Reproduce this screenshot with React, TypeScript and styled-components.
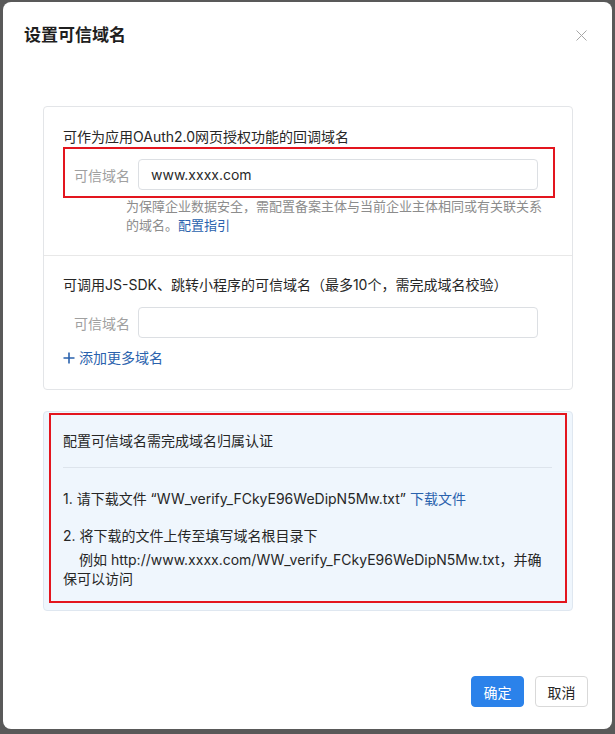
import React from "react";
import styled, { createGlobalStyle } from "styled-components";

const GlobalStyle = createGlobalStyle`
    html, body {
        margin: 0;
        padding: 0;
    }
    body {
        font-family: Inter, "Noto Sans CJK SC", sans-serif;
        color: #333;
        background: #595959;
    }
    * {
        box-sizing: border-box;
    }
`;

const Backdrop = styled.div`
    height: 734px;
    padding: 2px 3px 5px 3px;
    background: #595959;
    display: flex;
`;

const Dialog = styled.div`
    flex: 1;
    display: flex;
    flex-direction: column;
    background: #fff;
    border-radius: 8px;
    padding: 21px 24px 22px 21px;
`;

const Header = styled.div`
    display: flex;
    align-items: center;
    justify-content: space-between;
    height: 24px;
`;

const Title = styled.h2`
    margin: 0;
    font-size: 17px;
    font-weight: 700;
    line-height: 24px;
    color: #1f1f1f;
`;

const Close = styled.button`
    width: 14px;
    height: 14px;
    border: 0;
    padding: 0;
    background: none;
    display: flex;
    align-items: center;
    justify-content: center;
`;

const Body = styled.div`
    flex: 1;
    padding: 59px 15px 0 19px;
    display: flex;
    flex-direction: column;
    gap: 21px;
`;

const Card = styled.div`
    border: 1px solid #e3e5e8;
    border-radius: 4px;
`;

const Section = styled.div<{ $divider?: boolean }>`
    position: relative;
    padding: ${p => (p.$divider ? "19px 19px 21px" : "20px 19px 20px")};
    border-top: ${p => (p.$divider ? "1px solid #e8e8e8" : "none")};
`;

const SectionLabel = styled.div`
    font-size: 14px;
    line-height: 20px;
    color: #262626;
`;

const FieldRow = styled.div`
    display: flex;
    align-items: center;
    gap: 8px;
    margin-top: 12px;
`;

const FieldLabel = styled.span`
    width: 67px;
    text-align: right;
    font-size: 14px;
    color: #a0a0a0;
`;

const Input = styled.div`
    width: 400px;
    height: 31px;
    border: 1px solid #dcdfe3;
    border-radius: 4px;
    padding: 0 12px;
    display: flex;
    align-items: center;
    font-size: 14px;
    color: #2a2a2a;
`;

const Hint = styled.p`
    margin: 7px 0 0 63px;
    width: 416px;
    font-size: 13px;
    line-height: 19px;
    color: #8c8c8c;
`;

const Link = styled.a`
    color: #2a62ad;
    text-decoration: none;
    cursor: pointer;
`;

const AddMore = styled.div`
    display: flex;
    align-items: center;
    gap: 4px;
    margin-top: 10px;
    font-size: 14px;
    line-height: 20px;
    color: #2a62ad;
`;

const Mark = styled.div<{ $top: number; $left: number; $right: number; $bottom: number }>`
    position: absolute;
    top: ${p => p.$top}px;
    left: ${p => p.$left}px;
    right: ${p => p.$right}px;
    bottom: ${p => p.$bottom}px;
    border: 2px solid #e3151e;
    pointer-events: none;
`;

const Notice = styled.div`
    position: relative;
    background: #eff6fd;
    border: 1px solid #dfe7f0;
    border-radius: 4px;
    padding: 19px 20px 22px 19px;
    font-size: 14px;
    color: #262626;
`;

const NoticeTitle = styled.div`
    line-height: 20px;
`;

const NoticeRule = styled.div`
    height: 1px;
    background: #dde4ec;
    margin: 16px 0 21px;
`;

const Step = styled.div`
    line-height: 19px;
    & + & {
        margin-top: 18px;
    }
`;

const StepExample = styled.div`
    text-indent: 16px;
    margin-top: 5px;
`;

const Footer = styled.div`
    display: flex;
    justify-content: flex-end;
    gap: 11px;
`;

const Button = styled.button<{ $primary?: boolean }>`
    width: 53px;
    height: 31px;
    border-radius: 4px;
    font-family: inherit;
    font-size: 14px;
    cursor: pointer;
    border: 1px solid ${p => (p.$primary ? "#2b82ea" : "#d9d9d9")};
    background: ${p => (p.$primary ? "#2b82ea" : "#fff")};
    color: ${p => (p.$primary ? "#fff" : "#262626")};
`;

const App = () => {
    return <>
        <GlobalStyle />
        <Backdrop>
            <Dialog>
                <Header>
                    <Title>设置可信域名</Title>
                    <Close aria-label="关闭">
                        <svg width="11" height="11" viewBox="0 0 11 11">
                            <path d="M0.5 0.5 L10.5 10.5 M10.5 0.5 L0.5 10.5" stroke="#a6a6a6" strokeWidth="1" />
                        </svg>
                    </Close>
                </Header>

                <Body>
                    <Card>
                        <Section>
                            <SectionLabel>可作为应用OAuth2.0网页授权功能的回调域名</SectionLabel>
                            <FieldRow>
                                <FieldLabel>可信域名</FieldLabel>
                                <Input>www.xxxx.com</Input>
                            </FieldRow>
                            <Mark $top={40} $left={19} $right={17} $bottom={57} />
                            <Hint>
                                为保障企业数据安全，需配置备案主体与当前企业主体相同或有关联关系的域名。<Link>配置指引</Link>
                            </Hint>
                        </Section>

                        <Section $divider>
                            <SectionLabel>可调用JS-SDK、跳转小程序的可信域名（最多10个，需完成域名校验）</SectionLabel>
                            <FieldRow>
                                <FieldLabel>可信域名</FieldLabel>
                                <Input />
                            </FieldRow>
                            <AddMore>
                                <svg width="12" height="12" viewBox="0 0 12 12">
                                    <path d="M6 0.5 V11.5 M0.5 6 H11.5" stroke="#2a62ad" strokeWidth="1.6" />
                                </svg>
                                添加更多域名
                            </AddMore>
                        </Section>
                    </Card>

                    <Notice>
                        <NoticeTitle>配置可信域名需完成域名归属认证</NoticeTitle>
                        <NoticeRule />
                        <Step>
                            1. 请下载文件 “WW_verify_FCkyE96WeDipN5Mw.txt” <Link>下载文件</Link>
                        </Step>
                        <Step>
                            2. 将下载的文件上传至填写域名根目录下
                            <StepExample>例如 http://www.xxxx.com/WW_verify_FCkyE96WeDipN5Mw.txt，并确保可以访问</StepExample>
                        </Step>
                        <Mark $top={1} $left={5} $right={5} $bottom={7} />
                    </Notice>
                </Body>

                <Footer>
                    <Button $primary>确定</Button>
                    <Button>取消</Button>
                </Footer>
            </Dialog>
        </Backdrop>
    </>
}

export default App;
